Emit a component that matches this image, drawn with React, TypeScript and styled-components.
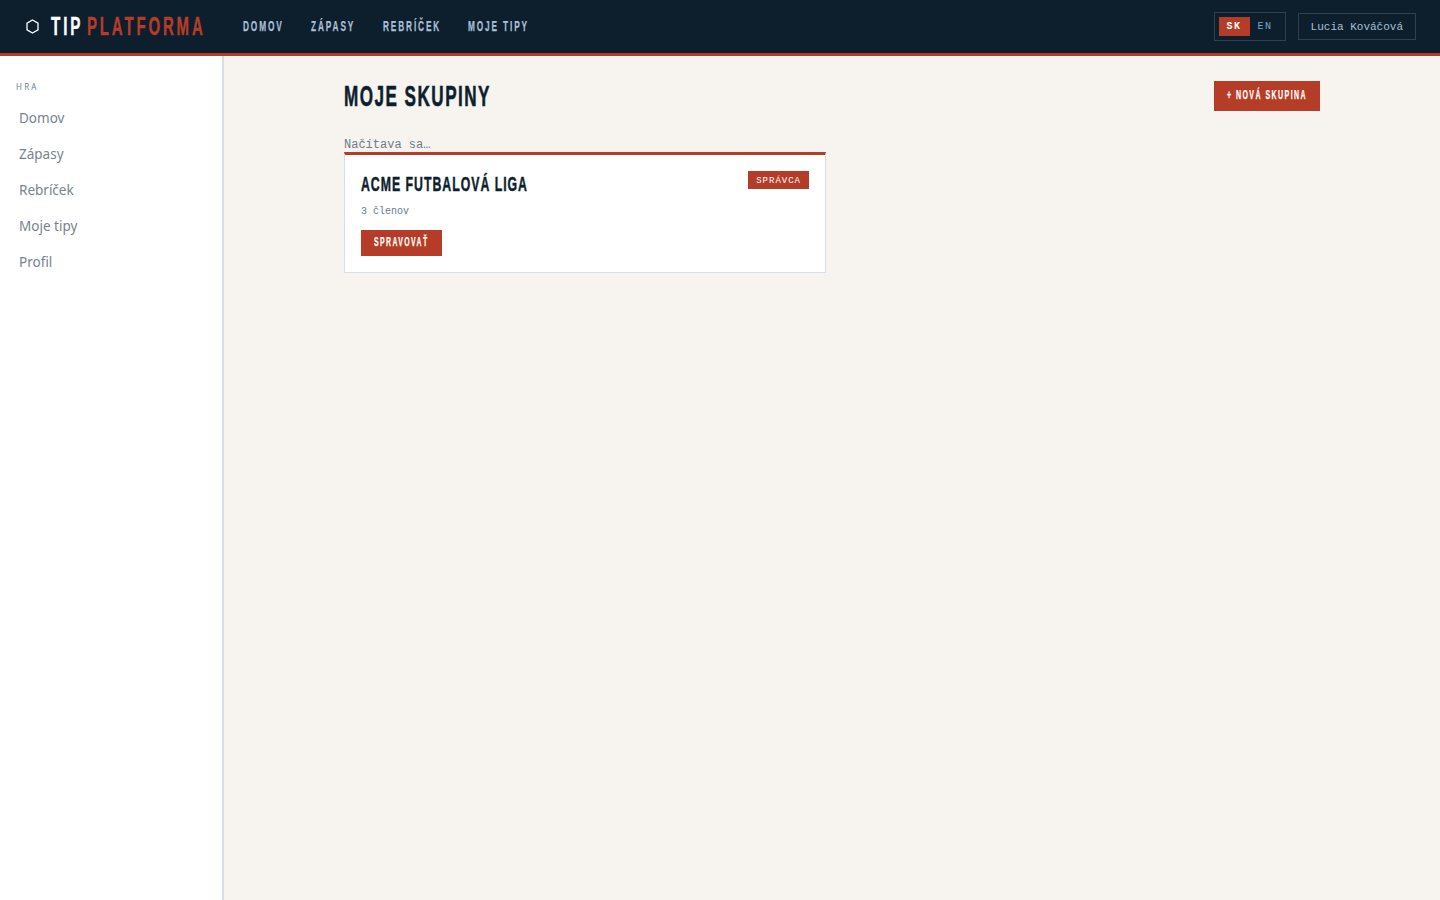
import styled, { createGlobalStyle } from 'styled-components'

const display = `"Liberation Sans", Arial, sans-serif`
const mono = `"Liberation Mono", "DejaVu Sans Mono", monospace`
const sans = `"Noto Sans", "Open Sans", sans-serif`

const GlobalStyle = createGlobalStyle`
  * {
    box-sizing: border-box;
  }

  html,
  body {
    margin: 0;
    height: 100%;
    background: #f7f4ef;
    font-family: ${sans};
  }
`

// No condensed face is installed, so the poster headings are squeezed horizontally.
const Squeezed = styled.span<{ $w: number; $k?: number; $stroke?: number }>`
  display: inline-block;
  width: ${({ $w }) => $w}px;
  font-family: ${display};
  font-weight: 700;
  white-space: nowrap;
  -webkit-text-stroke: ${({ $stroke }) => $stroke ?? 0.25}px currentColor;
  transform: scaleX(${({ $k }) => $k ?? 0.6});
  transform-origin: left center;
`

const Page = styled.div`
  display: flex;
  flex-direction: column;
  height: 900px;
`

const TopBar = styled.header`
  display: flex;
  align-items: center;
  flex-shrink: 0;
  height: 56px;
  padding: 0 24px;
  background: #0d1f2d;
  border-bottom: 3px solid #b53d27;
`

const Logo = styled.div`
  display: flex;
  align-items: center;
  flex-shrink: 0;
  width: 219px;
  font-size: 26px;
  letter-spacing: 5px;
  color: #ffffff;
`

const LogoIcon = styled.svg`
  flex-shrink: 0;
  width: 17px;
  height: 17px;
  margin-right: 10px;
`

const LogoAccent = styled(Squeezed)`
  margin-left: 6px;
  color: #b53d27;
`

const MainNav = styled.nav`
  display: flex;
  gap: 28px;
  margin-bottom: 2px;
`

const NavLink = styled(Squeezed)`
  font-size: 14.5px;
  letter-spacing: 3.3px;
  color: #a9bfd6;
`

const Right = styled.div`
  display: flex;
  align-items: center;
  gap: 12px;
  margin-left: auto;
`

const LangSwitch = styled.div`
  display: flex;
  padding: 4px;
  border: 1px solid #2c4152;
`

const LangButton = styled.span<{ $active?: boolean }>`
  width: 31px;
  height: 19px;
  font-family: ${mono};
  font-size: 10px;
  font-weight: ${({ $active }) => ($active ? 700 : 400)};
  line-height: 19px;
  letter-spacing: 1.5px;
  text-align: center;
  color: ${({ $active }) => ($active ? '#ffffff' : '#7fa6c9')};
  background: ${({ $active }) => ($active ? '#b53d27' : 'transparent')};
`

const UserBox = styled.div`
  height: 27px;
  padding: 0 12px;
  font-family: ${mono};
  font-size: 11px;
  line-height: 26px;
  color: #a9bfd6;
  border: 1px solid #2c4152;
`

const Body = styled.div`
  display: flex;
  flex: 1;
  min-height: 0;
`

const Sidebar = styled.aside`
  flex-shrink: 0;
  width: 224px;
  padding: 25px 0 0 16px;
  background: #ffffff;
  border-right: 2px solid #d6dfe9;
`

const SideTitle = styled.div`
  margin-bottom: 8px;
  font-family: ${sans};
  font-size: 8px;
  line-height: 11px;
  letter-spacing: 2.2px;
  color: #6b7c8c;
`

const SideLink = styled.a`
  display: block;
  height: 36px;
  padding-left: 3px;
  font-size: 13.5px;
  line-height: 36px;
  color: #77838f;
`

const Main = styled.main`
  flex: 1;
  padding: 25px 120px 0;
`

const Heading = styled.div`
  display: flex;
  align-items: center;
  justify-content: space-between;
  height: 30px;
`

const Title = styled.h1`
  display: flex;
  margin: 0;
  font-size: 29px;
  line-height: 30px;
  letter-spacing: 2.5px;
  color: #0d1f2d;
`

const PrimaryButton = styled.div<{ $width: number; $height: number }>`
  width: ${({ $width }) => $width}px;
  height: ${({ $height }) => $height}px;
  padding: 0 13px;
  font-size: 12.5px;
  line-height: ${({ $height }) => $height - 2}px;
  letter-spacing: 2.6px;
  color: #ffffff;
  background: #b53d27;
`

const Loading = styled.div`
  height: 14px;
  margin-top: 27px;
  font-family: ${mono};
  font-size: 12px;
  line-height: 15px;
  color: #6b7c8c;
`

const Card = styled.article`
  width: 482px;
  height: 121px;
  padding: 17px 16px 16px;
  background: #ffffff;
  border: 1px solid #d6dfe9;
  border-top: 3px solid #b53d27;
`

const CardHead = styled.div`
  display: flex;
  align-items: flex-start;
  justify-content: space-between;
`

const CardTitle = styled.h2`
  display: flex;
  margin: 0;
  font-size: 21px;
  line-height: 24px;
  letter-spacing: 1.7px;
  color: #0d1f2d;
`

const Badge = styled.span`
  height: 18px;
  margin-top: -1px;
  padding: 0 8px;
  font-family: ${mono};
  font-size: 9px;
  line-height: 20px;
  letter-spacing: 1px;
  color: #ffffff;
  background: #b53d27;
`

const Members = styled.div`
  margin-top: 9px;
  font-family: ${mono};
  font-size: 10px;
  line-height: 13px;
  color: #6b7c8c;
`

const ManageButton = styled(PrimaryButton)`
  margin-top: 12px;
`

const navItems = [
  { label: 'DOMOV', width: 40 },
  { label: 'ZÁPASY', width: 44 },
  { label: 'REBRÍČEK', width: 57 },
  { label: 'MOJE TIPY', width: 59 },
]
const sideItems = ['Domov', 'Zápasy', 'Rebríček', 'Moje tipy', 'Profil']

export default function App() {
  return (
    <Page>
      <GlobalStyle />
      <TopBar>
        <Logo>
          <LogoIcon viewBox="0 0 17 17" fill="none" stroke="#ffffff" strokeWidth="1.3">
            <path d="M8.5 2 L14 5.2 V11.8 L8.5 15 L3 11.8 V5.2 Z" />
          </LogoIcon>
          <Squeezed $w={30} $k={0.585} $stroke={0.4}>TIP</Squeezed>
          <LogoAccent $w={117} $k={0.575} $stroke={0.4}>PLATFORMA</LogoAccent>
        </Logo>
        <MainNav>
          {navItems.map((item) => (
            <NavLink key={item.label} $w={item.width} $k={0.57}>{item.label}</NavLink>
          ))}
        </MainNav>
        <Right>
          <LangSwitch>
            <LangButton $active>SK</LangButton>
            <LangButton>EN</LangButton>
          </LangSwitch>
          <UserBox>Lucia Kováčová</UserBox>
        </Right>
      </TopBar>
      <Body>
        <Sidebar>
          <SideTitle>HRA</SideTitle>
          {sideItems.map((item) => (
            <SideLink key={item}>{item}</SideLink>
          ))}
        </Sidebar>
        <Main>
          <Heading>
            <Title>
              <Squeezed $w={147} $k={0.59} $stroke={0.6}>MOJE SKUPINY</Squeezed>
            </Title>
            <PrimaryButton $width={106} $height={30}>
              <Squeezed $w={80} $k={0.56}>+ NOVÁ SKUPINA</Squeezed>
            </PrimaryButton>
          </Heading>
          <Loading>Načítava sa…</Loading>
          <Card>
            <CardHead>
              <CardTitle>
                <Squeezed $w={167} $k={0.585} $stroke={0.5}>ACME FUTBALOVÁ LIGA</Squeezed>
              </CardTitle>
              <Badge>SPRÁVCA</Badge>
            </CardHead>
            <Members>3 členov</Members>
            <ManageButton $width={81} $height={26}>
              <Squeezed $w={55} $k={0.55}>SPRAVOVAŤ</Squeezed>
            </ManageButton>
          </Card>
        </Main>
      </Body>
    </Page>
  )
}
